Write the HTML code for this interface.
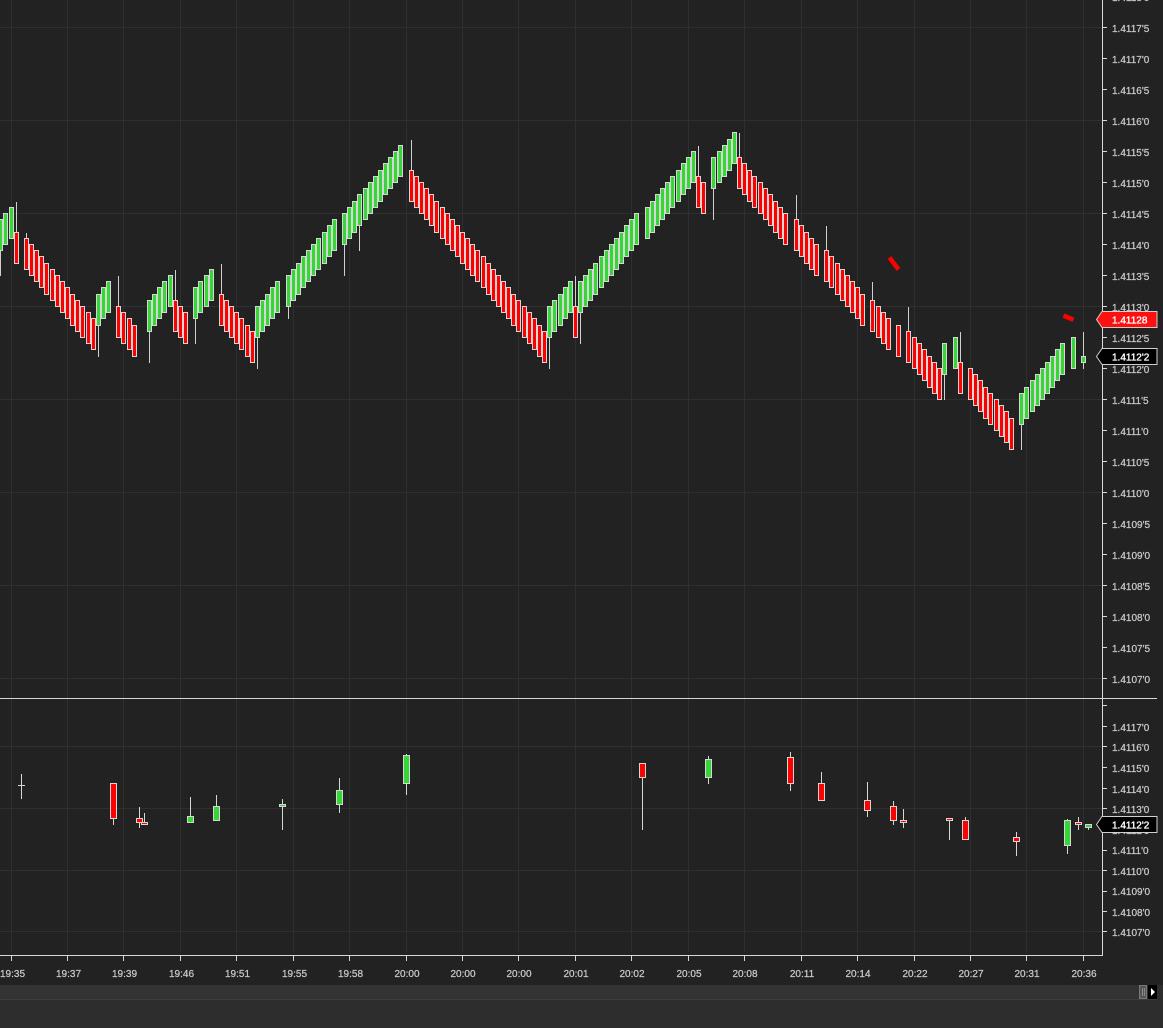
<!DOCTYPE html>
<html><head><meta charset="utf-8"><style>
html,body{margin:0;padding:0;background:#222;width:1163px;height:1028px;overflow:hidden}
svg{display:block}
text{font-family:"Liberation Sans",Arial,sans-serif;font-size:10px;fill:#c8c8c8;stroke:#c8c8c8;stroke-width:.25px}
</style></head><body>
<svg width="1163" height="1028" viewBox="0 0 1163 1028" xmlns="http://www.w3.org/2000/svg">
<rect width="1163" height="1028" fill="#222"/>
<rect y="985" width="1163" height="43" fill="#2d2d2d"/>
<rect y="985" width="1157" height="14" fill="#333"/>
<rect y="999" width="1157" height="1" fill="#3d3d3d"/>
<path fill="none" stroke="#2f2f2f" d="M0 27.5H1102M0 120.5H1102M0 213.5H1102M0 306.5H1102M0 399.5H1102M0 492.5H1102M0 585.5H1102M0 678.5H1102M0 746.5H1102M0 808.5H1102M0 870.5H1102M0 931.5H1102M11.5 0V952M67.5 0V952M123.5 0V952M180.5 0V952M236.5 0V952M293.5 0V952M349.5 0V952M406.5 0V952M462.5 0V952M518.5 0V952M575.5 0V952M631.5 0V952M688.5 0V952M744.5 0V952M801.5 0V952M857.5 0V952M914.5 0V952M970.5 0V952M1026.5 0V952M1083.5 0V952"/>
<path fill="none" stroke="#d0d0d0" d="M0.5 250V276M16.5 202V232M26.5 233V238M98.5 325V357M118.5 276V306M149.5 331V363M175.5 270V300M195.5 318V344M221.5 264V294M257.5 337V369M288.5 306V319M344.5 244V276M359.5 225V251M411.5 140V170M549.5 337V369M575.5 276V306M580.5 312V344M698.5 146V176M713.5 188V220M739.5 133V157M796.5 195V219M826.5 226V250M872.5 282V300M908.5 307V331M944.5 374V400M960.5 332V362M1021.5 424V450M1083.5 332V369"/>
<path fill="#ff0000" stroke="#d6d6d6" d="M14.5 232.5h4v31h-4zM24.5 238.5h4v31h-4zM29.5 244.5h4v31h-4zM34.5 250.5h4v31h-4zM39.5 256.5h4v31h-4zM44.5 263.5h4v31h-4zM50.5 269.5h4v31h-4zM55.5 275.5h4v31h-4zM60.5 281.5h4v31h-4zM65.5 287.5h4v31h-4zM70.5 294.5h4v31h-4zM75.5 300.5h4v31h-4zM80.5 306.5h4v31h-4zM86.5 312.5h4v31h-4zM91.5 318.5h4v31h-4zM116.5 306.5h4v31h-4zM121.5 312.5h4v31h-4zM127.5 318.5h4v31h-4zM132.5 325.5h4v31h-4zM173.5 300.5h4v31h-4zM178.5 306.5h4v31h-4zM183.5 312.5h4v31h-4zM219.5 294.5h4v31h-4zM224.5 300.5h4v31h-4zM229.5 306.5h4v31h-4zM234.5 312.5h4v31h-4zM239.5 318.5h4v31h-4zM245.5 325.5h4v31h-4zM250.5 331.5h4v31h-4zM409.5 170.5h4v31h-4zM414.5 176.5h4v31h-4zM419.5 182.5h4v31h-4zM424.5 188.5h4v31h-4zM429.5 194.5h4v31h-4zM434.5 201.5h4v31h-4zM440.5 207.5h4v31h-4zM445.5 213.5h4v31h-4zM450.5 219.5h4v31h-4zM455.5 225.5h4v31h-4zM460.5 232.5h4v31h-4zM465.5 238.5h4v31h-4zM470.5 244.5h4v31h-4zM475.5 250.5h4v31h-4zM481.5 256.5h4v31h-4zM486.5 263.5h4v31h-4zM491.5 269.5h4v31h-4zM496.5 275.5h4v31h-4zM501.5 281.5h4v31h-4zM506.5 287.5h4v31h-4zM511.5 294.5h4v31h-4zM516.5 300.5h4v31h-4zM522.5 306.5h4v31h-4zM527.5 312.5h4v31h-4zM532.5 318.5h4v31h-4zM537.5 325.5h4v31h-4zM542.5 331.5h4v31h-4zM573.5 306.5h4v31h-4zM696.5 176.5h4v31h-4zM701.5 182.5h4v31h-4zM737.5 157.5h4v31h-4zM742.5 163.5h4v31h-4zM747.5 170.5h4v31h-4zM752.5 176.5h4v31h-4zM758.5 182.5h4v31h-4zM763.5 188.5h4v31h-4zM768.5 194.5h4v31h-4zM773.5 201.5h4v31h-4zM778.5 207.5h4v31h-4zM783.5 213.5h4v31h-4zM794.5 219.5h4v31h-4zM799.5 225.5h4v31h-4zM804.5 232.5h4v31h-4zM809.5 238.5h4v31h-4zM814.5 244.5h4v31h-4zM824.5 250.5h4v31h-4zM829.5 256.5h4v31h-4zM835.5 263.5h4v31h-4zM840.5 269.5h4v31h-4zM845.5 275.5h4v31h-4zM850.5 281.5h4v31h-4zM855.5 287.5h4v31h-4zM860.5 294.5h4v31h-4zM870.5 300.5h4v31h-4zM876.5 306.5h4v31h-4zM881.5 312.5h4v31h-4zM886.5 318.5h4v31h-4zM896.5 325.5h4v31h-4zM906.5 331.5h4v31h-4zM912.5 337.5h4v31h-4zM917.5 343.5h4v31h-4zM922.5 349.5h4v31h-4zM927.5 356.5h4v31h-4zM932.5 362.5h4v31h-4zM937.5 368.5h4v31h-4zM958.5 362.5h4v31h-4zM968.5 368.5h4v31h-4zM973.5 374.5h4v31h-4zM978.5 380.5h4v31h-4zM983.5 387.5h4v31h-4zM988.5 393.5h4v31h-4zM994.5 399.5h4v31h-4zM999.5 405.5h4v31h-4zM1004.5 411.5h4v31h-4zM1009.5 418.5h4v31h-4z"/>
<path fill="#35d635" stroke="#d6d6d6" d="M-1.5 219.5h4v31h-4zM3.5 213.5h4v31h-4zM9.5 207.5h4v31h-4zM96.5 294.5h4v31h-4zM101.5 287.5h4v31h-4zM106.5 281.5h4v31h-4zM147.5 300.5h4v31h-4zM152.5 294.5h4v31h-4zM157.5 287.5h4v31h-4zM162.5 281.5h4v31h-4zM168.5 275.5h4v31h-4zM193.5 287.5h4v31h-4zM198.5 281.5h4v31h-4zM204.5 275.5h4v31h-4zM209.5 269.5h4v31h-4zM255.5 306.5h4v31h-4zM260.5 300.5h4v31h-4zM265.5 294.5h4v31h-4zM270.5 287.5h4v31h-4zM275.5 281.5h4v31h-4zM286.5 275.5h4v31h-4zM291.5 269.5h4v31h-4zM296.5 263.5h4v31h-4zM301.5 256.5h4v31h-4zM306.5 250.5h4v31h-4zM311.5 244.5h4v31h-4zM316.5 238.5h4v31h-4zM322.5 232.5h4v31h-4zM327.5 225.5h4v31h-4zM332.5 219.5h4v31h-4zM342.5 213.5h4v31h-4zM347.5 207.5h4v31h-4zM352.5 201.5h4v31h-4zM357.5 194.5h4v31h-4zM363.5 188.5h4v31h-4zM368.5 182.5h4v31h-4zM373.5 176.5h4v31h-4zM378.5 170.5h4v31h-4zM383.5 163.5h4v31h-4zM388.5 157.5h4v31h-4zM393.5 151.5h4v31h-4zM398.5 145.5h4v31h-4zM547.5 306.5h4v31h-4zM552.5 300.5h4v31h-4zM558.5 294.5h4v31h-4zM563.5 287.5h4v31h-4zM568.5 281.5h4v31h-4zM578.5 281.5h4v31h-4zM583.5 275.5h4v31h-4zM588.5 269.5h4v31h-4zM593.5 263.5h4v31h-4zM599.5 256.5h4v31h-4zM604.5 250.5h4v31h-4zM609.5 244.5h4v31h-4zM614.5 238.5h4v31h-4zM619.5 232.5h4v31h-4zM624.5 225.5h4v31h-4zM629.5 219.5h4v31h-4zM634.5 213.5h4v31h-4zM645.5 207.5h4v31h-4zM650.5 201.5h4v31h-4zM655.5 194.5h4v31h-4zM660.5 188.5h4v31h-4zM665.5 182.5h4v31h-4zM670.5 176.5h4v31h-4zM676.5 170.5h4v31h-4zM681.5 163.5h4v31h-4zM686.5 157.5h4v31h-4zM691.5 151.5h4v31h-4zM711.5 157.5h4v31h-4zM717.5 151.5h4v31h-4zM722.5 145.5h4v31h-4zM727.5 139.5h4v31h-4zM732.5 132.5h4v31h-4zM942.5 343.5h4v31h-4zM953.5 337.5h4v31h-4zM1019.5 393.5h4v31h-4zM1024.5 387.5h4v31h-4zM1030.5 380.5h4v31h-4zM1035.5 374.5h4v31h-4zM1040.5 368.5h4v31h-4zM1045.5 362.5h4v31h-4zM1050.5 356.5h4v31h-4zM1055.5 349.5h4v31h-4zM1060.5 343.5h4v31h-4zM1071.5 337.5h4v31h-4zM1081.5 356.5h4v6h-4z"/>
<path fill="none" stroke="#ff0000" stroke-width="4.5" d="M889.5 257.5L898.5 269.5M1063.5 315.5L1073.5 319.8"/>
<path fill="none" stroke="#d6d6d6" d="M0 698.5H1157M21.5 774V799M18 785.5H25M113.5 819V825M139.5 807V828M144.5 813V822M190.5 797V816M216.5 795V806M282.5 799V830M339.5 778V813M406.5 754V795M642.5 778V830M708.5 756V784M790.5 752V791M821.5 772V783M867.5 782V817M893.5 801V825M903.5 809V828M949.5 821V840M965.5 817V820M1016.5 832V856M1067.5 819V854M1078.5 817V830M1088.5 828V830"/>
<path fill="#ff0000" stroke="#d6d6d6" d="M110.5 783.5h6v35h-6zM136.5 818.5h6v4h-6zM141.5 822.5h6v2h-6zM639.5 763.5h6v14h-6zM787.5 757.5h6v26h-6zM818.5 783.5h6v17h-6zM864.5 800.5h6v10h-6zM890.5 806.5h6v14h-6zM900.5 820.5h6v2h-6zM946.5 818.5h6v2h-6zM962.5 820.5h6v19h-6zM1013.5 837.5h6v4h-6zM1075.5 822.5h6v2h-6z"/>
<path fill="#35d635" stroke="#d6d6d6" d="M187.5 816.5h6v6h-6zM213.5 806.5h6v14h-6zM279.5 804.5h6v2h-6zM336.5 790.5h6v14h-6zM403.5 755.5h6v28h-6zM705.5 759.5h6v18h-6zM1064.5 820.5h6v25h-6zM1085.5 824.5h6v3h-6z"/>
<path fill="none" stroke="#d8d8d8" d="M1102.5 0V955.5H0M11.5 955V961M67.5 955V961M123.5 955V961M180.5 955V961M236.5 955V961M293.5 955V961M349.5 955V961M406.5 955V961M462.5 955V961M518.5 955V961M575.5 955V961M631.5 955V961M688.5 955V961M744.5 955V961M801.5 955V961M857.5 955V961M914.5 955V961M970.5 955V961M1026.5 955V961M1083.5 955V961M1103 27.5H1107M1103 58.5H1107M1103 89.5H1107M1103 120.5H1107M1103 151.5H1107M1103 182.5H1107M1103 213.5H1107M1103 244.5H1107M1103 275.5H1107M1103 306.5H1107M1103 337.5H1107M1103 368.5H1107M1103 399.5H1107M1103 430.5H1107M1103 461.5H1107M1103 492.5H1107M1103 523.5H1107M1103 554.5H1107M1103 585.5H1107M1103 616.5H1107M1103 647.5H1107M1103 678.5H1107M1103 705.5H1107M1103 726.5H1107M1103 746.5H1107M1103 767.5H1107M1103 788.5H1107M1103 808.5H1107M1103 829.5H1107M1103 850.5H1107M1103 870.5H1107M1103 891.5H1107M1103 911.5H1107M1103 931.5H1107"/>
<text x="1112" y="1">1.4118'0</text>
<text x="1112" y="32">1.4117'5</text>
<text x="1112" y="63">1.4117'0</text>
<text x="1112" y="94">1.4116'5</text>
<text x="1112" y="125">1.4116'0</text>
<text x="1112" y="156">1.4115'5</text>
<text x="1112" y="187">1.4115'0</text>
<text x="1112" y="218">1.4114'5</text>
<text x="1112" y="249">1.4114'0</text>
<text x="1112" y="280">1.4113'5</text>
<text x="1112" y="311">1.4113'0</text>
<text x="1112" y="342">1.4112'5</text>
<text x="1112" y="373">1.4112'0</text>
<text x="1112" y="404">1.4111'5</text>
<text x="1112" y="435">1.4111'0</text>
<text x="1112" y="466">1.4110'5</text>
<text x="1112" y="497">1.4110'0</text>
<text x="1112" y="528">1.4109'5</text>
<text x="1112" y="559">1.4109'0</text>
<text x="1112" y="590">1.4108'5</text>
<text x="1112" y="621">1.4108'0</text>
<text x="1112" y="652">1.4107'5</text>
<text x="1112" y="683">1.4107'0</text>
<text x="1112" y="731">1.4117'0</text>
<text x="1112" y="751">1.4116'0</text>
<text x="1112" y="772">1.4115'0</text>
<text x="1112" y="793">1.4114'0</text>
<text x="1112" y="813">1.4113'0</text>
<text x="1112" y="834">1.4112'0</text>
<text x="1112" y="854">1.4111'0</text>
<text x="1112" y="875">1.4110'0</text>
<text x="1112" y="895">1.4109'0</text>
<text x="1112" y="916">1.4108'0</text>
<text x="1112" y="936">1.4107'0</text>
<g text-anchor="middle">
<text x="12.5" y="977">19:35</text>
<text x="68.5" y="977">19:37</text>
<text x="124.5" y="977">19:39</text>
<text x="181.5" y="977">19:46</text>
<text x="237.5" y="977">19:51</text>
<text x="294.5" y="977">19:55</text>
<text x="350.5" y="977">19:58</text>
<text x="407" y="977">20:00</text>
<text x="463" y="977">20:00</text>
<text x="519" y="977">20:00</text>
<text x="576" y="977">20:01</text>
<text x="632" y="977">20:02</text>
<text x="689" y="977">20:05</text>
<text x="745" y="977">20:08</text>
<text x="802" y="977">20:11</text>
<text x="858" y="977">20:14</text>
<text x="915" y="977">20:22</text>
<text x="971" y="977">20:27</text>
<text x="1027" y="977">20:31</text>
<text x="1084" y="977">20:36</text>
</g>
<path fill="#ff1010" stroke="#cfcfcf" d="M1096.5 319.5L1102 311.5H1157V327.5H1102Z"/>
<text x="1112" y="323.5" style="fill:#fff;stroke:#fff;stroke-width:.35px">1.41128</text>
<path fill="#000" stroke="#cfcfcf" d="M1096.5 356.5L1102 348.5H1157V364.5H1102Z"/>
<text x="1112" y="360.5" style="fill:#fff;stroke:#fff;stroke-width:.35px">1.4112'2</text>
<path fill="#000" stroke="#cfcfcf" d="M1096.5 824.5L1102 816.5H1157V832.5H1102Z"/>
<text x="1112" y="828.5" style="fill:#fff;stroke:#fff;stroke-width:.35px">1.4112'2</text>
<rect x="1139.5" y="985.5" width="7" height="13" fill="#555" stroke="#777"/>
<path stroke="#888" fill="none" d="M1142.5 988V996M1144.5 988V996"/>
<rect x="1148" y="985" width="9" height="14" fill="#000"/>
<path fill="#fff" d="M1151 988L1155 992L1151 996Z"/>
</svg>
</body></html>
